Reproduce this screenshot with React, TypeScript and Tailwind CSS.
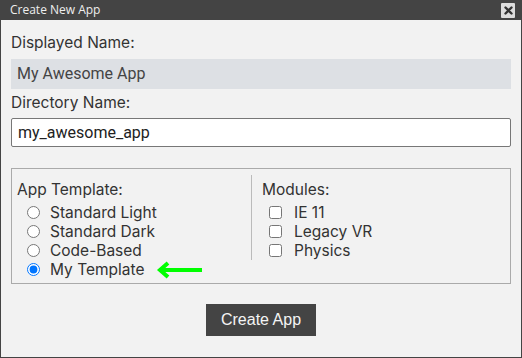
import React from "react";

const templates = ["Standard Light", "Standard Dark", "Code-Based", "My Template"];
const modules = ["IE 11", "Legacy VR", "Physics"];

export default function App() {
  return (
    <div className="w-[522px] h-[358px] flex flex-col bg-[#f2f2f2] border-x border-b border-[#444] text-[#333] font-['Inter',sans-serif]">
      {/* Title bar */}
      <div className="h-[20px] shrink-0 bg-[#444] flex items-center justify-between pl-[10px] pr-[7px] -mx-px">
        <span className="text-[12px] text-[#eee] leading-none font-['Open_Sans',sans-serif]">Create New App</span>
        <button className="w-[14px] h-[15px] bg-[#ddd] rounded-[1px] flex items-center justify-center">
          <svg width="9" height="9" viewBox="0 0 9 9">
            <path d="M1.5 1.5L7.5 7.5M7.5 1.5L1.5 7.5" stroke="#333" strokeWidth="2.4" strokeLinecap="round" />
          </svg>
        </button>
      </div>

      <div className="flex-1 flex flex-col px-[10px]">
        <label className="block mt-[13px] mb-[6px] text-[15.5px] leading-[20px]">Displayed Name:</label>
        <div className="h-[30px] bg-[#dde0e4] px-[6px] flex items-center text-[16px] text-[#444] font-['Roboto',sans-serif]">My Awesome App</div>

        <label className="block mt-[4px] mb-[5px] text-[15.5px] leading-[20px]">Directory Name:</label>
        <input
          className="h-[29px] w-full bg-white border border-[#777] rounded-[2px] px-[6px] text-[16px] text-[#222] font-['Roboto',sans-serif] outline-none"
          defaultValue="my_awesome_app"
        />

        {/* Template + modules box */}
        <div className="mt-[21px] h-[116px] border border-[#aaa] flex pt-[6px]">
          <div className="w-[239px] pl-[5px] pt-[5px]">
            <div className="text-[15.5px] leading-[20px] mb-[3px]">App Template:</div>
            {templates.map((t, i) => (
              <div key={t} className="flex items-center h-[19px] pl-[10px] gap-[10px] text-[15.5px]">
                <input
                  type="radio"
                  name="tpl"
                  defaultChecked={i === 3}
                  className="m-0 w-[13px] h-[13px]"
                />
                <span>{t}</span>
                {i === 3 && (
                  <svg width="48" height="18" viewBox="0 0 48 18" className="ml-[2px]">
                    <path d="M46 9H5M12 2L4 9L12 16" stroke="#00ff00" strokeWidth="4" fill="none" />
                  </svg>
                )}
              </div>
            ))}
          </div>
          <div className="w-px h-[85px] bg-[#bbb]" />
          <div className="flex-1 pl-[10px] pt-[5px]">
            <div className="text-[15.5px] leading-[20px] mb-[3px]">Modules:</div>
            {modules.map((m) => (
              <div key={m} className="flex items-center h-[19px] pl-[7px] gap-[12px] text-[15.5px]">
                <input type="checkbox" className="m-0 w-[13px] h-[13px]" />
                <span>{m}</span>
              </div>
            ))}
          </div>
        </div>

        <div className="flex justify-center mt-[20px]">
          <button className="w-[110px] h-[32px] bg-[#444] text-[#f4f4f4] text-[16px] font-['Liberation_Sans',sans-serif]">
            Create App
          </button>
        </div>
      </div>
    </div>
  );
}
